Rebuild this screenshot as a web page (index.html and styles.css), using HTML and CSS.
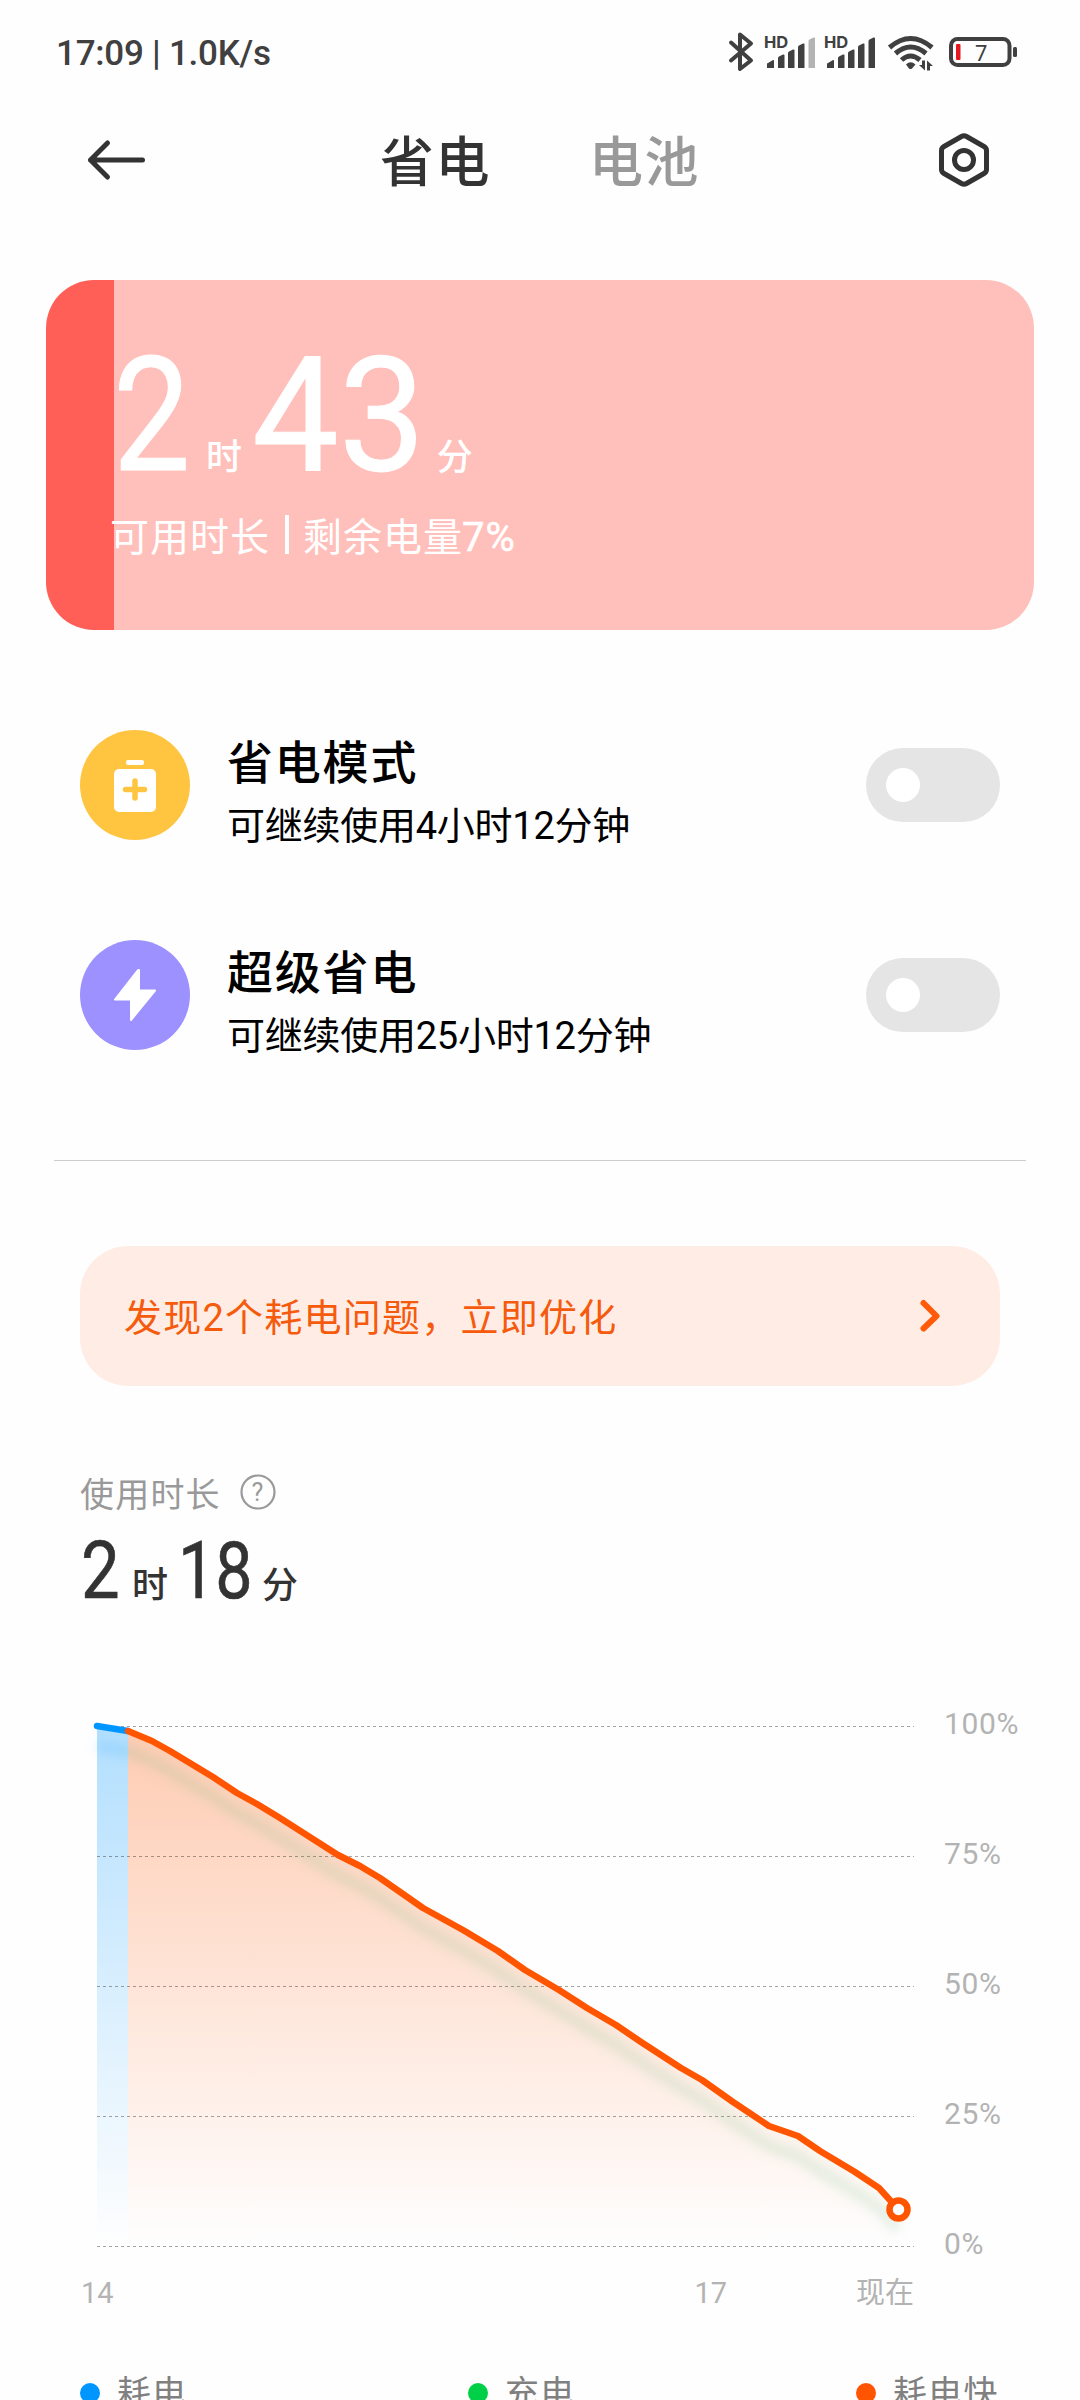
FILE: index.html
```html
<!DOCTYPE html>
<html lang="zh-CN">
<head>
<meta charset="utf-8">
<title>省电</title>
<link rel="stylesheet" href="styles.css">
</head>
<body>
<div class="screen">
  <header class="status">
    <span class="clock">17:09 | 1.0K/s</span>
    <svg class="status-icons" width="296" height="50" viewBox="724 27 296 50">
      <g fill="none" stroke="#404040" stroke-width="4" stroke-linecap="round" stroke-linejoin="round">
        <path d="M731 42.500L751 60.500L740 69V34.500L751 43.500L731 60.500"/>
      </g>
      <g class="hd"><text x="764" y="48">HD</text><text x="824" y="48">HD</text></g>
      <g fill="#404040">
        <path d="M767 68v-4q0-1 1-1l5-3q1-.5 1 1v7z"/>
        <path d="M778 68v-10q0-1 1-1.500l4-2q1.500-.5 1.500 1V68z"/>
        <path d="M788 68V53q0-1 1-1.500l4-2q1.500-.5 1.500 1V68z"/>
        <path d="M798 68V47q0-1 1-1.500l4-2q1.500-.5 1.500 1V68z"/>
        <path d="M808.500 68V41q0-1 1-1.500l4-2q1.500-.5 1.500 1V68z" fill="#b3b3b3"/>
        <path d="M827 68v-4q0-1 1-1l5-3q1-.5 1 1v7z"/>
        <path d="M838 68v-10q0-1 1-1.500l4-2q1.500-.5 1.500 1V68z"/>
        <path d="M848 68V53q0-1 1-1.500l4-2q1.500-.5 1.500 1V68z"/>
        <path d="M858 68V47q0-1 1-1.500l4-2q1.500-.5 1.500 1V68z"/>
        <path d="M868.500 68V41q0-1 1-1.500l4-2q1.500-.5 1.500 1V68z"/>
      </g>
      <g fill="none" stroke="#404040" stroke-width="5">
        <path d="M889.500 47.500Q910.500 29.500 932 47.500"/>
        <path d="M895.500 53.500Q910.500 40.500 926 53.500"/>
        <path d="M901.500 60Q910.500 52 920 60"/>
      </g>
      <path d="M906 64.500Q910.500 60 915.500 64.500L912 68.500Q910.500 69.500 909 68.500z" fill="#404040"/>
      <path d="M922 60.500h3V70.500l-6-5.500h3zM930 70.500h-3V60.500l6 5.500h-3z" fill="#404040"/>
      <rect x="951" y="39" width="58.500" height="26" rx="6.500" fill="none" stroke="#404040" stroke-width="4"/>
      <rect x="1013" y="47" width="4" height="10" rx="1.500" fill="#404040"/>
      <rect x="956" y="44" width="4.500" height="16" rx="1" fill="#e3191f"/>
      <text class="level" x="975" y="61">7</text>
    </svg>
  </header>

  <nav class="topbar">
    <svg width="62" height="42" viewBox="84 139.500 62 42" fill="none" stroke="#333" stroke-width="5" stroke-linecap="round" stroke-linejoin="round">
      <path d="M142.500 160.500H90.500M107.500 143.500L90.500 160.500L107.500 177.500"/>
    </svg>
    <div class="tabs"><span class="tab active">省电</span><span class="tab">电池</span></div>
    <svg width="54" height="56" viewBox="937 132 54 56" fill="none" stroke="#333" stroke-width="5" stroke-linejoin="round">
      <path d="M961.500 136.500Q964 135 966.500 136.500L984 146.500Q986.500 148 986.500 150.500V169.500Q986.500 172 984 173.500L966.500 183.500Q964 185 961.500 183.500L944 173.500Q941.500 172 941.500 169.500V150.500Q941.500 148 944 146.500Z"/>
      <circle cx="964" cy="160" r="9.500"/>
    </svg>
  </nav>

  <section class="card">
    <div class="card-time"><span class="big hours">2</span><span class="unit u1">时</span><span class="big minutes">43</span><span class="unit u2">分</span></div>
    <div class="card-note"><span>可用时长</span><i class="bar"></i><span>剩余电量<b>7%</b></span></div>
  </section>

  <section class="modes">
    <div class="mode">
      <div class="badge yellow">
        <svg width="44" height="54" viewBox="0 0 44 54">
          <rect x="13" y="2" width="18" height="5" rx="2" fill="#fff"/>
          <rect x="1" y="11" width="42" height="43" rx="5" fill="#fff"/>
          <path d="M22 23v17M12.500 31.500h19" stroke="#ffc541" stroke-width="5.500" stroke-linecap="round"/>
        </svg>
      </div>
      <div class="mode-text"><h2>省电模式</h2><p>可继续使用4小时12分钟</p></div>
      <div class="toggle"></div>
    </div>
    <div class="mode">
      <div class="badge purple">
        <svg width="44" height="54" viewBox="0 0 44 54">
          <path d="M25 2L2 31.500H18V52L42 22.500H26V2Z" fill="#fff" stroke="#fff" stroke-width="2" stroke-linejoin="round"/>
        </svg>
      </div>
      <div class="mode-text"><h2>超级省电</h2><p>可继续使用25小时12分钟</p></div>
      <div class="toggle"></div>
    </div>
  </section>

  <hr class="divider">

  <section class="banner">
    <span>发现2个耗电问题，立即优化</span>
    <svg width="24" height="36" viewBox="0 0 24 36" fill="none" stroke="#ff5a0a" stroke-width="6" stroke-linecap="round" stroke-linejoin="round"><path d="M5.500 5L18.500 18L5.500 30.500"/></svg>
  </section>

  <section class="usage">
    <div class="usage-label">使用时长
      <svg width="36" height="36" viewBox="0 0 36 36"><circle cx="18" cy="18" r="16.500" fill="none" stroke="#999" stroke-width="2.200"/><text x="18" y="26.500" text-anchor="middle">?</text></svg>
    </div>
    <div class="usage-time"><span class="mid">2</span><span class="unit v1">时</span><span class="mid minutes-used">18</span><span class="unit v2">分</span></div>
  </section>

  <section class="chart">
    <svg width="860" height="570" viewBox="70 1700 860 570">
      <defs>
        <linearGradient id="blue" gradientUnits="userSpaceOnUse" x1="0" y1="1726" x2="0" y2="2246"><stop offset="0" stop-color="#0096ff" stop-opacity=".3"/><stop offset="1" stop-color="#0096ff" stop-opacity="0"/></linearGradient>
        <linearGradient id="orange" gradientUnits="userSpaceOnUse" x1="0" y1="1726" x2="0" y2="2246"><stop offset="0" stop-color="#ff5500" stop-opacity=".3"/><stop offset="1" stop-color="#ff5500" stop-opacity="0"/></linearGradient>
        <filter id="soft" x="-10%" y="-10%" width="120%" height="120%"><feGaussianBlur stdDeviation="6"/></filter>
        <filter id="soft-short" filterUnits="userSpaceOnUse" x="70" y="1715" width="90" height="70"><feGaussianBlur stdDeviation="6"/></filter>
      </defs>
      <path d="M97 1727L128 1731V2246H97Z" fill="url(#blue)"/>
      <path d="M128 1731L152 1741L170 1751L213 1777L237 1793L257 1804L280 1818L338 1855L360 1866L380 1878L423 1908L443 1919L463 1930L498 1951L525 1970L559 1990L587 2008L616 2025L641 2042L681 2068L702 2080L733 2102L769 2126L798 2136L820 2151L855 2172L879 2188L898 2209V2246H128Z" fill="url(#orange)"/>
      <path d="M97 1726.500H914M97 1856.500H914M97 1986.500H914M97 2116.500H914M97 2246.500H914" stroke="#000" stroke-opacity=".35" stroke-dasharray="3 3"/>
      <g fill="none" stroke-width="9">
        <path d="M97 1746L128 1751" stroke="#0096ff" stroke-opacity=".18" filter="url(#soft-short)"/>
        <path transform="translate(0 20)" filter="url(#soft)" d="M128 1731L152 1741L170 1751L213 1777L237 1793L257 1804L280 1818L338 1855L360 1866L380 1878L423 1908L443 1919L463 1930L498 1951L525 1970L559 1990L587 2008L616 2025L641 2042L681 2068L702 2080L733 2102L769 2126L798 2136L820 2151L855 2172L879 2188L898 2209" stroke="#64b478" stroke-opacity=".22"/>
      </g>
      <g fill="none" stroke-width="6.500" stroke-linecap="round" stroke-linejoin="round">
        <path d="M97 1726L128 1731" stroke="#0096ff"/>
        <path d="M128 1731L152 1741L170 1751L213 1777L237 1793L257 1804L280 1818L338 1855L360 1866L380 1878L423 1908L443 1919L463 1930L498 1951L525 1970L559 1990L587 2008L616 2025L641 2042L681 2068L702 2080L733 2102L769 2126L798 2136L820 2151L855 2172L879 2188L898 2209" stroke="#ff5500"/>
      </g>
      <circle cx="898.500" cy="2209.500" r="9" fill="#fff" stroke="#ff5500" stroke-width="6.500"/>
    </svg>
    <div class="y-axis"><span>100%</span><span>75%</span><span>50%</span><span>25%</span><span>0%</span></div>
  </section>
  <div class="x-axis"><span>14</span><span class="x17">17</span><span>现在</span></div>

  <footer class="legend">
    <div><i class="dot blue"></i>耗电</div>
    <div><i class="dot green"></i>充电</div>
    <div><i class="dot orange"></i>耗电快</div>
  </footer>
</div>
</body>
</html>
```
FILE: styles.css
```css
* { box-sizing: border-box; margin: 0; padding: 0; }
body {
  background: #fefefe;
  color: #333;
  font-family: Roboto, "Noto Sans CJK SC", sans-serif;
}
.screen { width: 1080px; height: 2400px; overflow: hidden; }
svg { display: block; flex: none; }

.status { display: flex; justify-content: space-between; height: 106px; padding: 27px 60px 0 56px; }
.clock { font-size: 35px; line-height: 53px; font-weight: 500; letter-spacing: -.25px; color: #404040; white-space: pre; }
.hd text { font: 700 16.500px Inter, sans-serif; fill: #404040; }
.level { font: 400 22px Roboto, sans-serif; fill: #404040; }

.topbar { display: flex; align-items: center; justify-content: space-between; height: 108px; padding: 0 89px 0 84px; }
.tabs { display: flex; gap: 98px; padding: 8px 3px 0 0; }
.tab { font-size: 54px; line-height: 80px; font-weight: 500; letter-spacing: 1.500px; color: #999; }
.tab.active { color: #333; }

.card {
  width: 988px; height: 350px; margin: 66px 0 0 46px; padding: 55px 0 0 64px;
  border-radius: 48px; color: #fff;
  background: linear-gradient(90deg, #ff5f57 68px, #ffc0bb 68px);
}
.card-time { display: flex; align-items: baseline; height: 162px; line-height: 162px; }
.big { font-size: 160px; transform-origin: left; -webkit-text-stroke: 1px #fff; }
.hours { margin-left: 3px; transform: scaleX(.86); }
.minutes { transform: scaleX(.965); }
.unit { font-size: 36px; font-weight: 500; }
.u1 { margin: 0 10px 0 3px; }
.u2 { margin-left: 5px; }
.card-note { display: flex; align-items: center; height: 74px; font-size: 39px; letter-spacing: 1px; }
.card-note b { font-weight: 400; margin-left: -1px; font-size: 40px; -webkit-text-stroke: .5px #fff; }
.bar { width: 4px; height: 39px; margin: 0 14px 0 15px; background: #fff; }

.modes { padding: 100px 80px 0; }
.mode { display: flex; align-items: center; height: 110px; margin-bottom: 100px; }
.badge { display: flex; align-items: center; justify-content: center; width: 110px; height: 110px; border-radius: 50%; }
.yellow { background: #ffc541; }
.purple { background: #9d91ff; }
.mode-text { flex: 1; padding: 15px 0 0 37px; color: #000; }
.mode-text h2 { font-size: 46px; line-height: 66px; font-weight: 500; letter-spacing: 1.800px; }
.mode-text p { font-size: 38px; line-height: 60px; letter-spacing: -.25px; }
.toggle { width: 134px; height: 74px; padding: 20px; border-radius: 37px; background: #e5e5e5; }
.toggle::before { content: ""; display: block; width: 34px; height: 34px; border-radius: 50%; background: #fff; }

.divider { height: 1px; margin: 110px 54px 0; border: 0; background: #ccc; }

.banner {
  display: flex; align-items: center; justify-content: space-between;
  height: 140px; margin: 85px 80px 0; padding: 0 58px 0 44px;
  border-radius: 48px; background: #ffede5; color: #f55a0d; font-size: 38px; letter-spacing: 1.250px;
}
.banner span { padding-bottom: 3px; }

.usage { padding: 76px 80px 0; }
.usage-label { display: flex; align-items: center; gap: 19px; height: 60px; font-size: 34px; letter-spacing: 1.200px; color: #999; }
.usage-label text { font: 400 25px Roboto, sans-serif; fill: #999; }
.usage-time { display: flex; align-items: baseline; height: 100px; line-height: 99px; }
.mid { font-size: 80px; transform: scaleX(.86); transform-origin: left; margin-left: 1px; -webkit-text-stroke: .6px #333; }
.minutes-used { transform: scaleX(.83); }
.v1 { margin: 0 9px 0 6px; }
.v2 { margin-left: -6px; }

.chart { display: flex; height: 570px; margin-top: 78px; padding-left: 70px; color: #b3b3b3; font-size: 30px; }
.y-axis { display: flex; flex-direction: column; justify-content: space-between; height: 560px; margin: 4px 0 0 14px; letter-spacing: .6px; }
.y-axis span { line-height: 40px; }
.x-axis { display: flex; justify-content: space-between; padding: 0 166px 0 81px; height: 44px; line-height: 46px; font-size: 29px; color: #b3b3b3; }
.x17 { margin-left: 452px; }

.legend { display: grid; grid-template-columns: 388px 388px 1fr; padding: 54px 0 0 80px; font-size: 34px; line-height: 50px; color: #808080; letter-spacing: 1.200px; }
.legend div { display: flex; align-items: center; gap: 17px; }
.dot { width: 20px; height: 20px; border-radius: 50%; }
.blue { background: #0096ff; }
.green { background: #00d048; }
.orange { background: #ff5500; }
```
